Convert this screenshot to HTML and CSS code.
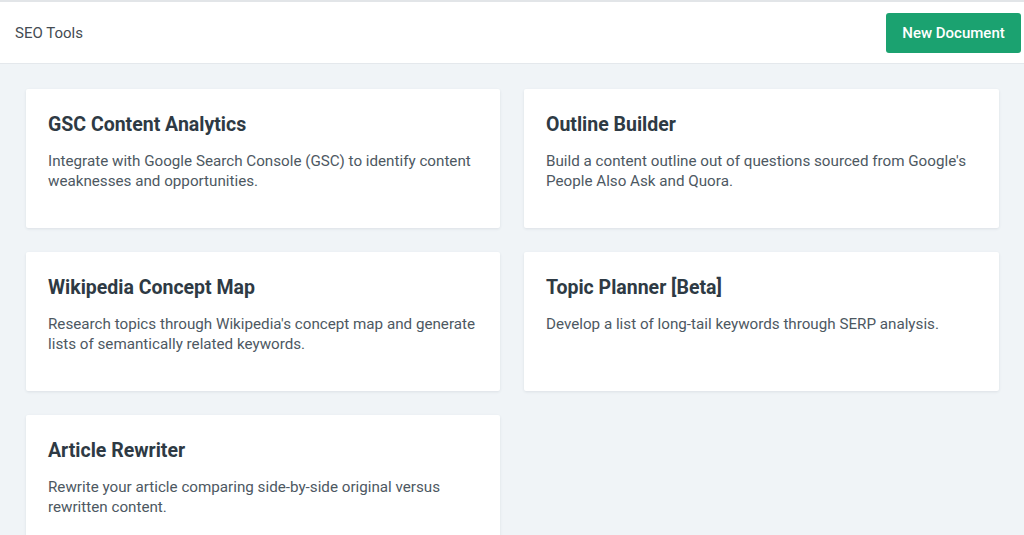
FILE: index.html
```html
<!DOCTYPE html>
<html lang="en">
  <head>
    <meta charset="UTF-8" />
    <meta name="viewport" content="width=device-width, initial-scale=1.0" />
    <title>SEO Tools</title>
    <link rel="stylesheet" href="styles.css">
  </head>
  <body>
    <header class="topbar">
      <span class="brand">SEO Tools</span>
      <button class="btn-new">New Document</button>
    </header>
    <main class="tools">
      <div class="card">
        <h2>GSC Content Analytics</h2>
        <p>Integrate with Google Search Console (GSC) to identify content weaknesses and opportunities.</p>
      </div>
      <div class="card">
        <h2>Outline Builder</h2>
        <p>Build a content outline out of questions sourced from Google's People Also Ask and Quora.</p>
      </div>
      <div class="card">
        <h2>Wikipedia Concept Map</h2>
        <p>Research topics through Wikipedia's concept map and generate lists of semantically related keywords.</p>
      </div>
      <div class="card">
        <h2>Topic Planner [Beta]</h2>
        <p>Develop a list of long-tail keywords through SERP analysis.</p>
      </div>
      <div class="card">
        <h2>Article Rewriter</h2>
        <p>Rewrite your article comparing side-by-side original versus rewritten content.</p>
      </div>
    </main>
  </body>
</html>
```

FILE: styles.css
```css
* {
  margin: 0;
  padding: 0;
  box-sizing: border-box;
}
body {
  font-family: Roboto, "Liberation Sans", sans-serif;
  background: #f0f4f7;
  border-top: 2px solid #e2e5e8;
  min-height: 100vh;
}
.topbar {
  display: flex;
  justify-content: space-between;
  align-items: center;
  height: 62px;
  padding: 0 3px 0 15px;
  background: #fff;
  border-bottom: 1px solid #e4e8ec;
}
.brand {
  font-size: 15px;
  color: #444b52;
}
.btn-new {
  height: 40px;
  width: 135px;
  border: none;
  border-radius: 3px;
  background: #1ba270;
  color: #fff;
  font-family: inherit;
  font-size: 15px;
  font-weight: 500;
}
.tools {
  display: grid;
  grid-template-columns: 474px 475px;
  gap: 24px;
  padding: 25px 25px 0 26px;
}
.card {
  min-height: 139px;
  padding: 24px 22px 20px;
  background: #fff;
  border-radius: 2px;
  box-shadow: 0 1px 3px rgba(40, 60, 80, 0.1);
}
.card h2 {
  font-size: 19.5px;
  font-weight: 700;
  color: #2e3a44;
  margin-bottom: 15px;
}
.card p {
  font-size: 15.2px;
  line-height: 20px;
  color: #4d5862;
}
```
